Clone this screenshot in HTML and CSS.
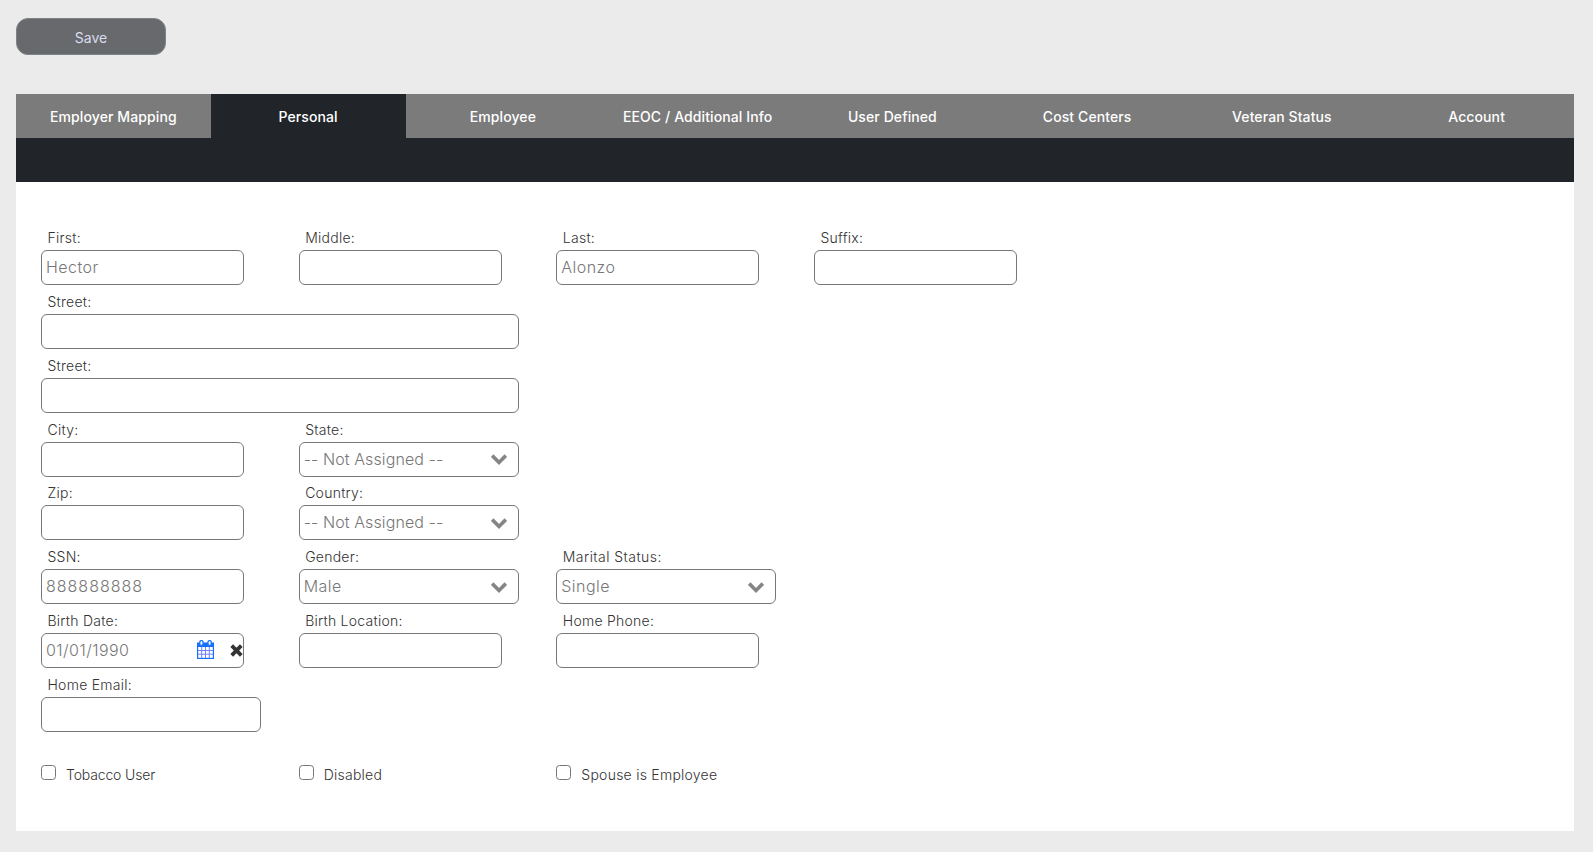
FILE: index.html
```html
<!DOCTYPE html>
<html lang="en">
<head>
<meta charset="utf-8">
<title>Employee</title>
<link rel="stylesheet" href="styles.css">
</head>
<body>
<svg width="0" height="0" class="defs">
  <symbol id="chevron" viewBox="0 0 16 11"><path d="M1.2 1.6 8 8.4l6.8-6.8" fill="none" stroke="#858585" stroke-width="3.6"/></symbol>
</svg>
<button class="save" type="button">Save</button>
<nav class="tabs">
  <a class="tab">Employer Mapping</a>
  <a class="tab active">Personal</a>
  <a class="tab">Employee</a>
  <a class="tab">EEOC / Additional Info</a>
  <a class="tab">User Defined</a>
  <a class="tab">Cost Centers</a>
  <a class="tab">Veteran Status</a>
  <a class="tab">Account</a>
</nav>
<div class="subnav"></div>
<main class="panel">
  <div class="row">
    <label class="field">First:<input value="Hector"></label>
    <label class="field">Middle:<input></label>
    <label class="field">Last:<input value="Alonzo"></label>
    <label class="field">Suffix:<input></label>
  </div>
  <div class="row"><label class="field street">Street:<input></label></div>
  <div class="row"><label class="field street">Street:<input></label></div>
  <div class="row">
    <label class="field">City:<input></label>
    <label class="field">State:<span class="pick"><select class="unassigned"><option>-- Not Assigned --</option></select><svg class="arrow"><use href="#chevron"/></svg></span></label>
  </div>
  <div class="row">
    <label class="field">Zip:<input></label>
    <label class="field">Country:<span class="pick"><select class="unassigned"><option>-- Not Assigned --</option></select><svg class="arrow"><use href="#chevron"/></svg></span></label>
  </div>
  <div class="row">
    <label class="field">SSN:<input class="digits" value="888888888"></label>
    <label class="field">Gender:<span class="pick"><select><option>Male</option></select><svg class="arrow"><use href="#chevron"/></svg></span></label>
    <label class="field wide-text">Marital Status:<span class="pick"><select><option>Single</option></select><svg class="arrow"><use href="#chevron"/></svg></span></label>
  </div>
  <div class="row">
    <label class="field">Birth Date:<span class="date"><input value="01/01/1990">
      <svg class="calendar" viewBox="0 0 17 19"><path d="M0 2.5h17V19H0z" fill="#1670ff"/><path d="M1.2 7h14.6v10.8H1.2z" fill="#fff"/><path d="M1 10.5h15M1 14.2h15M4.7 7v11M8.5 7v11M12.3 7v11" stroke="#6f83ff" stroke-width="1"/><rect x="2.8" y=".6" width="3.2" height="4.8" rx="1.5" fill="#fff" stroke="#1670ff" stroke-width="1.3"/><rect x="11" y=".6" width="3.2" height="4.8" rx="1.5" fill="#fff" stroke="#1670ff" stroke-width="1.3"/></svg>
      <svg class="clear" viewBox="0 0 13 13"><path d="m1.7 1.7 9.6 9.6M11.3 1.7l-9.6 9.6" stroke="#333" stroke-width="3.8"/></svg></span></label>
    <label class="field">Birth Location:<input></label>
    <label class="field">Home Phone:<input></label>
  </div>
  <div class="row"><label class="field email">Home Email:<input></label></div>
  <div class="checks">
    <label class="check tobacco"><input type="checkbox"><span>Tobacco User</span></label>
    <label class="check"><input type="checkbox"><span>Disabled</span></label>
    <label class="check"><input type="checkbox"><span>Spouse is Employee</span></label>
  </div>
</main>
</body>
</html>
```
FILE: styles.css
```css
* { box-sizing: border-box; }
body { margin: 0; padding: 18px 19px 0 16px; height: 852px; background: #ebebeb; font: 350 14px/20px Inter, sans-serif; letter-spacing: .25px; color: #333; overflow: hidden; }
.defs { display: none; }
.save { display: block; width: 150px; height: 37px; padding: 2px 0 0; border: 1px solid #7b8585; border-radius: 12px; background: #68696d; color: #d9dced; font: 14px Inter, sans-serif; letter-spacing: 0; }
.tabs { display: grid; grid-template-columns: repeat(8, 1fr); height: 44px; margin-top: 39px; background: #7b7b7b; }
.tab { display: flex; align-items: center; justify-content: center; padding-top: 2px; color: #fff; font-weight: 500; letter-spacing: .1px; white-space: nowrap; }
.active { background: #212429; }
.subnav { height: 44px; background: #212429; }
.panel { height: 649px; padding: 46px 25px 0; background: #fff; }
.row { display: grid; grid-template-columns: repeat(4, 257.67px); height: 63.86px; }
.field { display: block; text-indent: 6.5px; white-space: nowrap; }
.wide-text { letter-spacing: .45px; }
.field input, .field select { display: block; width: 203px; height: 35px; margin: 2px 0 0; padding: 0 4px 1px; border: 1px solid #777; border-radius: 6px; background: #fff; color: #777; font: 300 16px Inter, sans-serif; letter-spacing: .45px; text-indent: 0; appearance: none; }
.field select { width: 220px; }
.field .unassigned { letter-spacing: .1px; }
.street input { width: 478px; }
.email input { width: 220px; }
.field .digits { letter-spacing: 1px; }
.pick, .date { display: block; position: relative; width: 220px; }
.date { width: 203px; }
.arrow { position: absolute; left: 192px; top: 12.5px; width: 16px; height: 11px; }
.calendar { position: absolute; left: 155.5px; top: 7px; width: 17px; height: 19px; }
.clear { position: absolute; left: 188.5px; top: 10.5px; width: 13px; height: 13px; }
.checks { display: grid; grid-template-columns: repeat(3, 257.67px); margin-top: 26px; }
.check { display: flex; align-items: flex-start; gap: 10px; }
.tobacco { letter-spacing: -.15px; }
.check input { width: 15px; height: 15px; margin: 0; border: 1px solid #767676; border-radius: 3.5px; appearance: none; background: #fff; }
```
